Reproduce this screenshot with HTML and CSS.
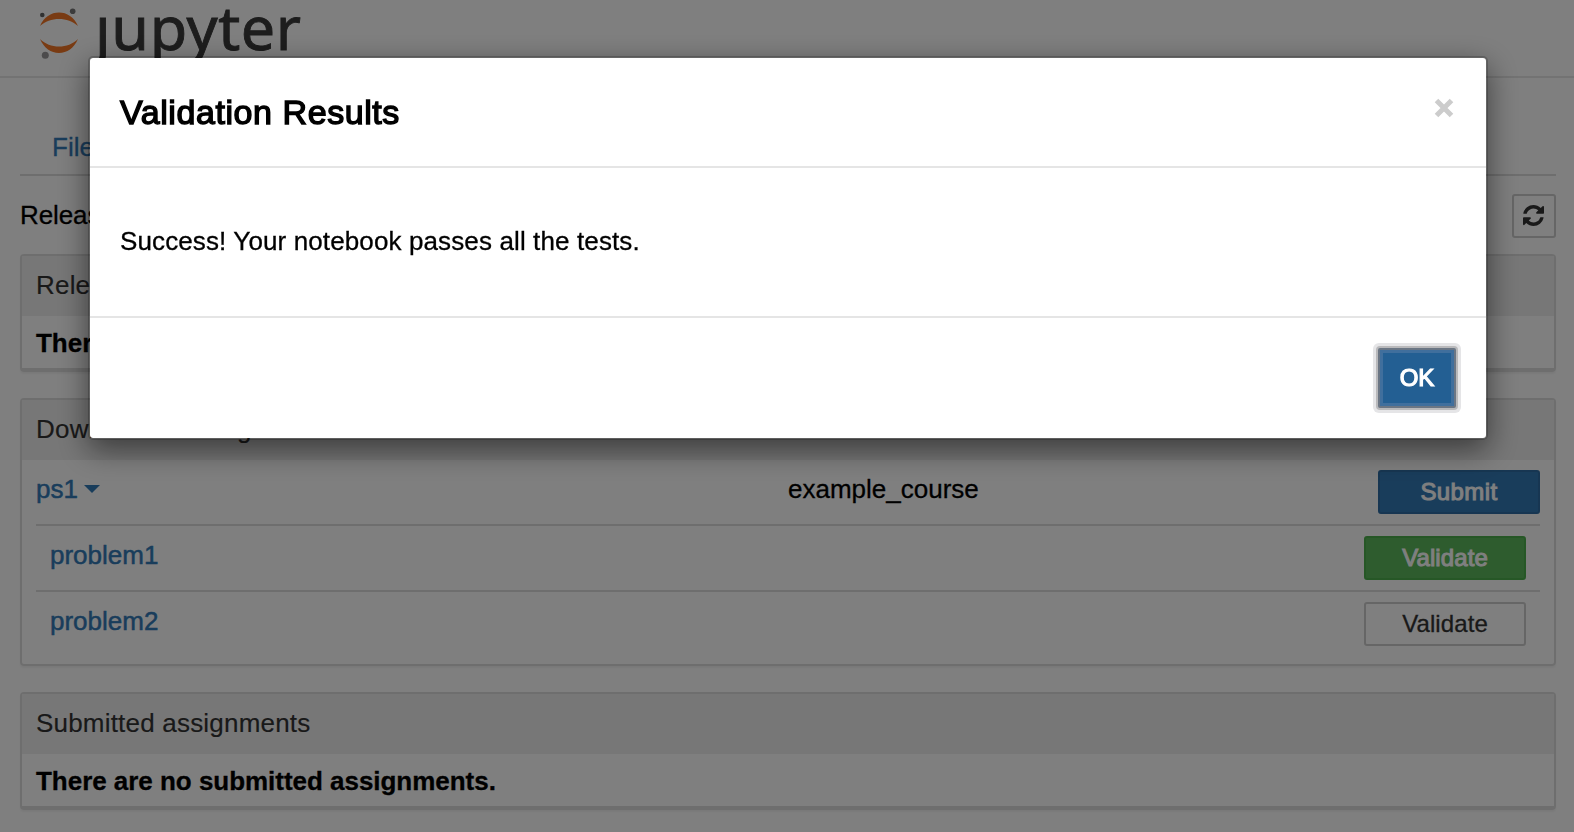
FILE: index.html
```html
<!DOCTYPE html>
<html lang="en">
<head>
<meta charset="utf-8">
<title>Jupyter - Assignments</title>
<link rel="stylesheet" href="styles.css">
</head>
<body>
<header class="header">
  <div class="logo">
    <svg class="logo-mark" width="40" height="52" viewBox="0 0 40 52">
      <path fill="#f37726" d="M0 18C4 9 11 4.500 19 4.500S34 9 38 18C33 13.500 26 11 19 11S5 13.500 0 18z"/>
      <path fill="#f37726" d="M0 31c4 9 11 14 19 14s15-5 19-14c-5 5-12 7.500-19 7.500S5 36 0 31z"/>
      <circle cx="2.300" cy="7" r="2.300" fill="#616262"/>
      <circle cx="32.700" cy="3.300" r="2.800" fill="#767677"/>
      <circle cx="5.300" cy="47.300" r="3.500" fill="#989798"/>
    </svg>
    <span class="wordmark"><span class="dotless">j</span>upyter</span>
  </div>
</header>
<main class="page">
  <nav class="tabs"><a class="tab">Files</a></nav>
  <div class="toolbar">
    <span class="toolbar-text">Released</span>
    <button class="refresh" aria-label="Refresh">
      <svg width="21" height="21" viewBox="0 0 1536 1536"><path fill="#333" d="M1511 928q0 5-1 7-64 268-268 434.500T764 1536q-146 0-282.500-55T238 1324l-129 129q-19 19-45 19t-45-19-19-45V960q0-26 19-45t45-19h448q26 0 45 19t19 45-19 45l-137 137q71 66 161 102t187 36q134 0 250-65t186-179q11-17 53-117 8-23 30-23h192q13 0 22.500 9.500t9.500 22.500zm25-800v448q0 26-19 45t-45 19h-448q-26 0-45-19t-19-45 19-45l138-138Q969 256 768 256q-134 0-250 65T332 500q-11 17-53 117-8 23-30 23H50q-13 0-22.500-9.500T18 608v-7q65-268 270-434.500T768 0q146 0 284 55.500T1297 212l130-129q19-19 45-19t45 19 19 45z"/></svg>
    </button>
  </div>
  <section class="panel">
    <div class="panel-heading">Released assignments</div>
    <div class="empty">There are no assignments to fetch.</div>
  </section>
  <section class="panel panel-list">
    <div class="panel-heading">Downloaded assignments</div>
    <div class="rows">
      <div class="row">
        <a class="name">ps1<span class="caret"></span></a>
        <span class="course">example_course</span>
        <button class="btn btn-primary">Submit</button>
      </div>
      <div class="row nested">
        <a class="name">problem1</a>
        <button class="btn btn-success">Validate</button>
      </div>
      <div class="row nested">
        <a class="name">problem2</a>
        <button class="btn btn-default">Validate</button>
      </div>
    </div>
  </section>
  <section class="panel">
    <div class="panel-heading">Submitted assignments</div>
    <div class="empty">There are no submitted assignments.</div>
  </section>
</main>
<div class="backdrop">
  <div class="modal" role="dialog">
    <div class="modal-header">
      <h4 class="modal-title">Validation Results</h4>
      <button class="close" aria-label="Close">
        <svg width="20" height="20" viewBox="0 0 20 20"><path d="M2.500 2.500l15 15M17.500 2.500l-15 15" stroke="#ccc" stroke-width="5"/></svg>
      </button>
    </div>
    <div class="modal-body">Success! Your notebook passes all the tests.</div>
    <div class="modal-footer"><button class="ok">OK</button></div>
  </div>
</div>
</body>
</html>
```
FILE: styles.css
```css
* { box-sizing: border-box; }
html, body { height: 100%; }
body {
  margin: 0;
  overflow: hidden;
  background: #fff;
  color: #000;
  font: 26px/30px "Liberation Sans", Arial, sans-serif;
  -webkit-text-stroke: .3px currentColor;
}
button { font-family: inherit; margin: 0; padding: 0; }
.header { height: 78px; border-bottom: 2px solid #e7e7e7; padding: 8px 0 0 40px; }
.logo { display: flex; height: 60px; }
.logo-mark { flex: none; }
.wordmark {
  margin-left: 15px;
  font: 61px/38px "Noto Sans", sans-serif;
  letter-spacing: .6px;
  color: #3a3a3a;
  white-space: nowrap;
  -webkit-text-stroke: .9px currentColor;
}
.dotless { display: inline-block; clip-path: inset(8px -20px -40px -20px); }
.page { padding: 0 18px 0 20px; }
.tabs { height: 98px; padding: 42px 0 0 32px; border-bottom: 2px solid #ddd; }
.tab { line-height: 54px; color: #337ab7; }
.toolbar { display: flex; justify-content: space-between; height: 78px; padding-top: 18px; }
.toolbar-text { line-height: 42px; letter-spacing: -.1px; }
.refresh {
  display: flex; align-items: center; justify-content: center;
  width: 44px; height: 44px;
  padding: 0 1px 1px 0;
  background: #fff; border: 2px solid #ccc; border-radius: 3px;
}
.panel {
  height: 118px;
  margin-bottom: 26px;
  border: 2px solid #ddd;
  border-bottom-width: 4px;
  border-radius: 4px;
  box-shadow: 0 2px 2px rgba(0, 0, 0, .05);
}
.panel-list { height: 268px; border-bottom-width: 2px; }
.panel-heading { height: 60px; padding-left: 14px; background: #eee; color: #333; line-height: 58px; letter-spacing: .2px; -webkit-text-stroke-width: .15px; }
.empty { padding: 1px 14px 0; font-weight: bold; line-height: 52px; letter-spacing: -.03px; }
.rows { padding: 0 14px; }
.row {
  display: grid;
  grid-template-columns: 752px 1fr 162px;
  height: 66px;
  border-bottom: 2px solid #ddd;
  line-height: 58px;
}
.row:last-child { border-bottom: 0; }
.nested { padding: 0 14px; grid-template-columns: 1fr 162px; }
.name { color: #337ab7; -webkit-text-stroke: .5px #337ab7; }
.caret { display: inline-block; margin-left: 6px; vertical-align: 5px; border: 8px solid transparent; border-top-color: #337ab7; border-bottom: 0; }
.btn { height: 44px; margin-top: 10px; border: 2px solid #ccc; border-radius: 3px; font-size: 24px; line-height: 38px; letter-spacing: .1px; }
.btn-primary { background: #337ab7; border-color: #2e6da4; color: #fff; letter-spacing: .4px; -webkit-text-stroke: 1px #fff; }
.btn-success { background: #5cb85c; border-color: #4cae4c; color: #fff; -webkit-text-stroke: 1px #fff; }
.btn-default { background: #fff; color: #333; -webkit-text-stroke: .3px #333; }
.backdrop { position: fixed; inset: 0; padding: 56px 86px 0 88px; background: rgba(0, 0, 0, .5); }
.modal {
  height: 384px;
  background: #fff;
  background-clip: padding-box;
  border: 2px solid rgba(0, 0, 0, .2);
  border-radius: 5px;
  box-shadow: 0 10px 30px rgba(0, 0, 0, .5);
}
.modal-header { display: flex; justify-content: space-between; height: 110px; padding: 30px 32px 0 30px; border-bottom: 2px solid #e5e5e5; }
.modal-title { margin: 0; font-size: 34px; font-weight: normal; line-height: 48px; letter-spacing: .57px; -webkit-text-stroke: 1.4px #000; }
.close { display: flex; align-items: center; width: 20px; height: 40px; border: 0; background: none; }
.modal-body { height: 148px; padding: 58px 30px 0; letter-spacing: .12px; }
.modal-footer { display: flex; justify-content: flex-end; height: 122px; padding: 30px 30px 0; border-top: 2px solid #e5e5e5; }
.ok {
  width: 78px; height: 60px;
  border: 2px solid #6b7684;
  border-radius: 2px;
  background: #235f93;
  color: #fff;
  font-size: 24px;
  line-height: 54px;
  -webkit-text-stroke: 1.2px #fff;
  box-shadow: inset 0 0 0 3px #406f9d, 0 0 0 2px #b9b9bb, 0 0 0 5px #e5e5e7;
}
```
